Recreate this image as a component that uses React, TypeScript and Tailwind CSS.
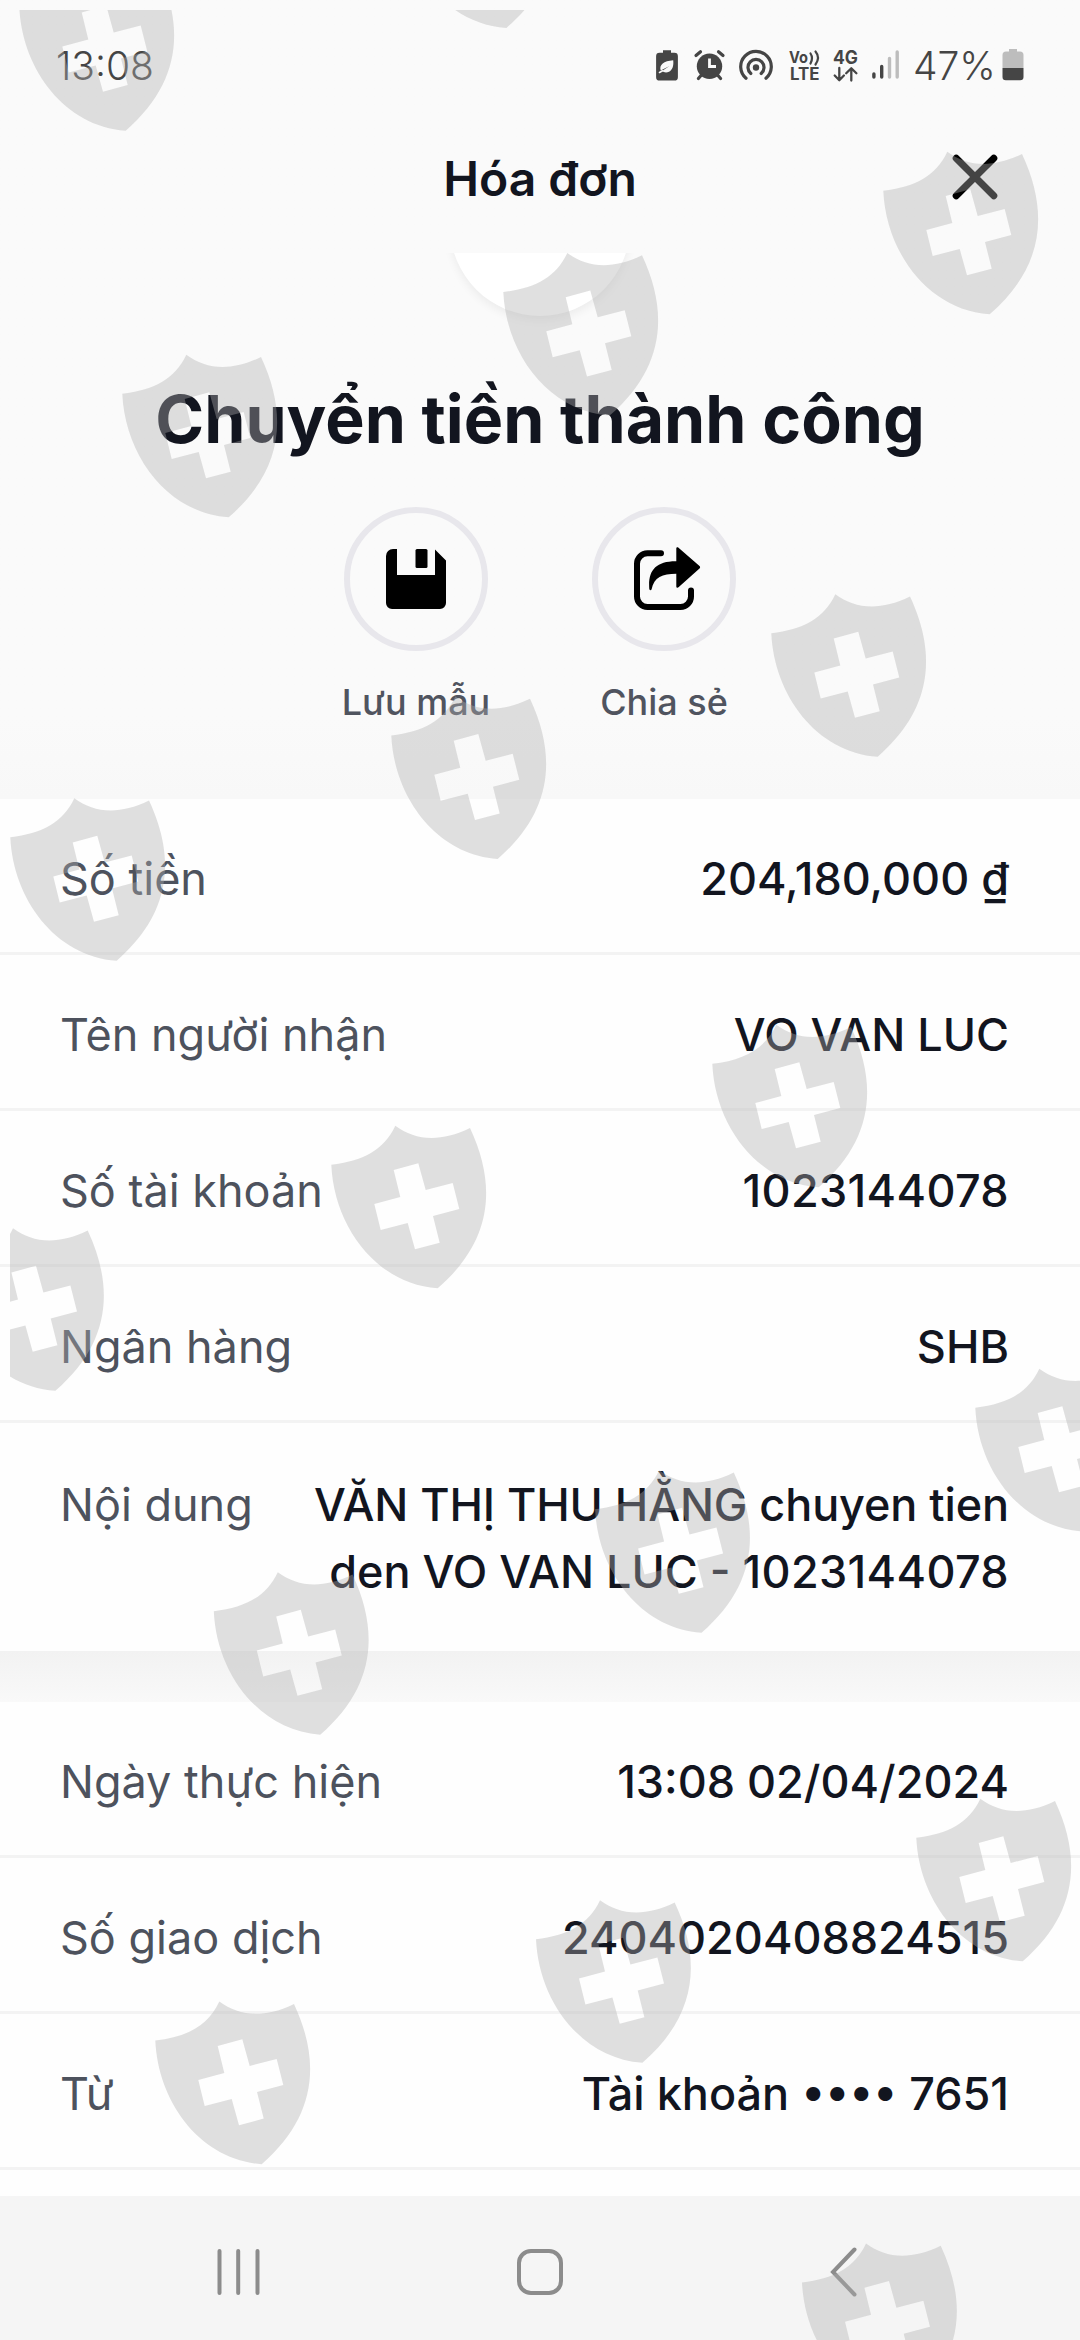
import React from "react";

const SHIELDS: [number, number][] = [
  [19, -31.6],
  [399.7, -134.3],
  [883, 152],
  [503, 253.3],
  [122, 355],
  [771, 594.5],
  [391, 696.7],
  [10, 798.5],
  [712, 1025],
  [331, 1126],
  [-51.3, 1228.5],
  [975, 1369],
  [594.8, 1470.5],
  [213.5, 1572.5],
  [916, 1799],
  [535.7, 1900.5],
  [155, 2001.9],
  [801.7, 2243.7],
];

const SHIELD_PATH =
  "M0.3 38.7C32 35 53 24 64.3 -0.3C84 14 108 17 139 2C167 62 160 116 106.7 162.3C45 158 3 100 0.3 38.7Z" +
  "M62.7 44L69.3 71L43.3 78L49.7 104L76.7 97L84 123.3L108.7 116.7L102 90L128.3 83L121.7 57L94.7 64L87.3 37.3Z";

function Watermark() {
  return (
    <svg
      className="pointer-events-none absolute inset-0 z-10"
      width="1080"
      height="2340"
      viewBox="0 0 1080 2340"
    >
      <defs>
        <clipPath id="wm">
          <rect x="10" y="10" width="1070" height="2330" />
        </clipPath>
      </defs>
      <g clipPath="url(#wm)" fill="#afafaf" fillOpacity="0.39" fillRule="evenodd">
        {SHIELDS.map(([x, y]) => (
          <path key={`${x}:${y}`} d={SHIELD_PATH} transform={`translate(${x} ${y})`} />
        ))}
      </g>
    </svg>
  );
}

function StatusIcons() {
  return (
    <svg width="249" height="36" viewBox="654 47 249 36" fill="none" className="block">
      {/* power saving battery */}
      <path
        d="M663 50.2h8v2.6h3.5a3.4 3.4 0 0 1 3.4 3.4v21a3.4 3.4 0 0 1-3.4 3.4h-15a3.4 3.4 0 0 1-3.4-3.4v-21a3.4 3.4 0 0 1 3.4-3.4h3.5z"
        fill="#454545"
      />
      <path d="M673.2 60.2c.6 5-.4 9.500-4.200 11.600-2.500 1.300-5.200.8-7-.7l7.500-5.200-8.800 4.500c-1.700-5.800 3-9.400 12.500-10.200z" fill="#fafafa" />
      <path d="M659.500 72.500l3-1.700" stroke="#fafafa" strokeWidth="1.600" strokeLinecap="round" />
      {/* alarm */}
      <circle cx="709.500" cy="66.300" r="12.700" fill="#454545" />
      <path d="M696 55.500l4.500-3.700M723 55.500l-4.500-3.700M701 75.500l-2.600 3M718 75.500l2.600 3" stroke="#454545" strokeWidth="3.200" strokeLinecap="round" />
      <path d="M709.500 58.500v8h6.500" stroke="#fafafa" strokeWidth="2.800" />
      {/* hotspot */}
      <circle cx="756" cy="67.500" r="3.200" fill="#454545" />
      <g stroke="#454545" strokeWidth="3.200" strokeLinecap="round">
        <path d="M750.800 73.500a8 8 0 1 1 10.400 0" />
        <path d="M746 78.200a15.300 15.300 0 1 1 20 0" />
      </g>
      {/* VoLTE */}
      <g fill="#454545" fontFamily="Inter, sans-serif" fontWeight="700">
        <text x="789" y="63" fontSize="16.500" textLength="19" lengthAdjust="spacingAndGlyphs">Vo</text>
        <text x="790" y="80" fontSize="17" textLength="29.500" lengthAdjust="spacingAndGlyphs">LTE</text>
        <text x="833" y="63.500" fontSize="18.500" textLength="25" lengthAdjust="spacingAndGlyphs">4G</text>
      </g>
      <path d="M810.500 53.500q3 4.500 0 10M815.500 51.500q5 6 0 13" stroke="#454545" strokeWidth="2.200" strokeLinecap="round" />
      {/* data arrows */}
      <path d="M839.300 68v12M834.700 75.500l4.600 4.700 4.600-4.700M851.300 80.500v-12M846.200 73.200l5.100-5 5.100 5" stroke="#454545" strokeWidth="2.300" strokeLinecap="round" strokeLinejoin="round" />
      {/* signal */}
      <g strokeWidth="3.400" strokeLinecap="round">
        <path d="M873.900 74v3M881.700 66.500v10.500" stroke="#454545" />
        <path d="M889.500 58.500v18.500M897.200 52v25" stroke="#bdbdbd" />
      </g>
    </svg>
  );
}

function BatteryIcon() {
  return (
    <svg width="22" height="32" viewBox="0 0 22 32" className="block">
      <path d="M7 0h8v2.500h3a3.500 3.500 0 0 1 3.500 3.500v13h-21V6A3.500 3.500 0 0 1 4 2.500h3z" fill="#bdbdbd" />
      <path d="M.500 19h21v9a3.300 3.300 0 0 1-3.300 3.300H3.800A3.300 3.300 0 0 1 .500 28z" fill="#454545" />
    </svg>
  );
}

function SaveIcon() {
  return (
    <svg width="60" height="60" viewBox="0 0 60 60" className="block">
      <path d="M7 0h4v26h38V0.500L60 11.500V54a6 6 0 0 1-6 6H6a6 6 0 0 1-6-6V7a7 7 0 0 1 7-7z" />
      <rect x="29.500" y="0" width="12" height="19" rx="1.500" />
    </svg>
  );
}

function ShareIcon() {
  return (
    <svg width="68" height="64" viewBox="633 546 68 64" className="block">
      <path
        d="M661 552.200h-13.500a10.500 10.500 0 0 0-10.500 10.500v32.800a10.500 10.500 0 0 0 10.500 10.500h33a10.500 10.500 0 0 0 10.500-10.500v-6"
        fill="none"
        stroke="#000"
        strokeWidth="6"
        strokeLinecap="round"
      />
      <path d="M676.300 547.500c0-1.300 1.300-1.700 2.200-.8l21 18.300c.8.700.8 1.700 0 2.400l-21 18.800c-.9.900-2.200.4-2.200-.8v-12.600c-14 0-22.300 3.500-24.700 15.500-.3 1.400-2.200 1.200-2.300-.2-1.500-18 6-28 27-27.800z" />
    </svg>
  );
}

function Action({ label, children }: { label: string; children: React.ReactNode }) {
  return (
    <div className="flex w-[144px] flex-col items-center">
      <div className="flex size-36 items-center justify-center rounded-full border-[6px] border-[#e8e7ec]">
        {children}
      </div>
      <div className="mt-[24px] text-[36px] leading-[54px] font-medium whitespace-nowrap text-[#50545f]">{label}</div>
    </div>
  );
}

function Row({ label, children, last }: { label: string; children: React.ReactNode; last?: boolean }) {
  return (
    <div
      className={
        last
          ? "flex h-[228px] justify-between bg-[#fefefe] pt-[48px] pr-[71px] pl-[60px]"
          : "flex h-[156px] justify-between border-b-[3px] border-[#f3f3f3] bg-[#fefefe] pt-[46px] pr-[71px] pl-[60px]"
      }
    >
      <div className="text-[45px] leading-[67px] whitespace-nowrap text-[#4d525d]">{label}</div>
      <div className="text-right text-[45px] leading-[67px] font-medium whitespace-nowrap text-[#12151f]">{children}</div>
    </div>
  );
}

export default function App() {
  return (
    <div className="relative flex h-[2340px] w-[1080px] flex-col overflow-hidden bg-[#fefefe] font-['Inter',sans-serif]">
      <div className="flex h-[799px] shrink-0 flex-col bg-linear-to-b from-[#fafafa] from-90% to-[#f8f8f8]">
        <div className="flex h-[130px] items-center justify-between pr-[56px] pl-[56px] text-[#454545]">
          <div className="text-[39px] leading-none font-light">13:08</div>
          <div className="flex items-center">
            <StatusIcons />
            <div className="ml-[10px] w-[83px] text-[39px] leading-none font-light whitespace-nowrap">47%</div>
            <div className="ml-[6px]">
              <BatteryIcon />
            </div>
          </div>
        </div>

        <div className="grid h-[123px] grid-cols-[1fr_auto_1fr] items-start">
          <div />
          <h1 className="pt-[13px] text-[48px] leading-[72px] font-semibold text-[#12151f]">Hóa đơn</h1>
          <button className="mt-[24px] mr-[82px] justify-self-end" aria-label="Đóng">
            <svg width="46" height="46" viewBox="0 0 46 46" className="block">
              <path d="M4.200 4.200L41.800 41.800M41.800 4.200L4.200 41.800" stroke="#000" strokeWidth="7" strokeLinecap="round" />
            </svg>
          </button>
        </div>

        <div className="flex h-[110px] items-start justify-center overflow-hidden">
          <div className="-mt-[117px] size-[180px] shrink-0 rounded-full bg-white shadow-[0_4px_10px_rgba(0,0,0,0.06)]" />
        </div>

        <h2 className="pt-[8px] text-center text-[66.200px] leading-[96px] font-bold whitespace-nowrap text-[#12151f]">
          Chuyển tiền thành công
        </h2>

        <div className="mt-[40px] flex justify-center gap-[104px]">
          <Action label="Lưu mẫu">
            <SaveIcon />
          </Action>
          <Action label="Chia sẻ">
            <div className="ml-[6px]">
              <ShareIcon />
            </div>
          </Action>
        </div>
      </div>

      <div className="flex shrink-0 flex-col">
        <Row label="Số tiền">204,180,000 ₫</Row>
        <Row label="Tên người nhận">VO VAN LUC</Row>
        <Row label="Số tài khoản">
          <span className="tracking-[0.350px]">1023144078</span>
        </Row>
        <Row label="Ngân hàng">SHB</Row>
        <Row label="Nội dung" last>
          <span className="tracking-[-0.100px]">VĂN THỊ THU HẰNG chuyen tien</span>
          <br />
          den VO VAN LUC - <span className="tracking-[0.350px]">1023144078</span>
        </Row>
      </div>

      <div className="h-[51px] shrink-0 bg-linear-to-b from-[#f2f2f2] to-[#f9f9f9]" />

      <div className="flex grow flex-col">
        <Row label="Ngày thực hiện">13:08 02/04/2024</Row>
        <Row label="Số giao dịch">2404020408824515</Row>
        <Row label="Từ">Tài khoản •••• 7651</Row>
      </div>

      <div className="grid h-[144px] shrink-0 grid-cols-3 items-center bg-[#f5f5f5] pt-[8px]">
        <svg width="44" height="46" viewBox="0 0 44 46" className="ml-[217px]" stroke="#8c8c8c" strokeWidth="4" strokeLinecap="round">
          <path d="M2.500 2v42M21.200 2v42M40.500 2v42" />
        </svg>
        <div className="size-[46px] justify-self-center rounded-[14px] border-[4px] border-[#8c8c8c]" />
        <svg width="27" height="50" viewBox="0 0 27 50" className="ml-[110px]" fill="none" stroke="#8c8c8c" strokeWidth="4" strokeLinecap="round">
          <path d="M24.500 2.500L3 25L24.500 47.500" />
        </svg>
      </div>

      <Watermark />
    </div>
  );
}
